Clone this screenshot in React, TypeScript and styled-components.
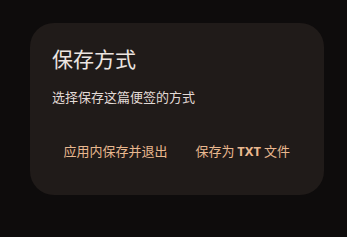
import React, { FC, ReactElement } from 'react';
import styled, { createGlobalStyle } from 'styled-components';

const GlobalStyle = createGlobalStyle`
    html, body {
        margin: 0;
        padding: 0;
        background-color: #0e0c0c;
        font-family: 'Noto Sans CJK SC', 'Noto Sans', sans-serif;
    }
`;

const Page = styled.div`
    width: 347px;
    height: 237px;
    padding: 23px 0 0 30px;
    box-sizing: border-box;
`;

const Dialog = styled.div`
    width: 294px;
    height: 172px;
    box-sizing: border-box;
    padding: 20px 22px 0;
    background-color: #201b19;
    border-radius: 24px;
    display: flex;
    flex-direction: column;
`;

const Title = styled.h1`
    margin: 0;
    font-size: 21px;
    line-height: 30px;
    font-weight: 400;
    color: #ece5e1;
`;

const Message = styled.p`
    margin: 14px 0 0;
    font-size: 13px;
    line-height: 20px;
    color: #e2dad6;
`;

const Actions = styled.div`
    display: flex;
    justify-content: flex-end;
    gap: 4px;
    margin-top: 27px;
`;

const Action = styled.button`
    flex-shrink: 0;
    white-space: nowrap;
    border: none;
    background: none;
    padding: 0 12px;
    height: 32px;
    font-family: inherit;
    font-size: 13px;
    color: #e9b88f;
    cursor: pointer;

    b {
        font-family: 'Noto Sans', sans-serif;
        font-weight: 700;
    }
`;

const App: FC = (): ReactElement => (
    <Page>
        <GlobalStyle />
        <Dialog>
            <Title>保存方式</Title>
            <Message>选择保存这篇便签的方式</Message>
            <Actions>
                <Action>应用内保存并退出</Action>
                <Action>
                    保存为 <b>TXT</b> 文件
                </Action>
            </Actions>
        </Dialog>
    </Page>
);

export default App;
